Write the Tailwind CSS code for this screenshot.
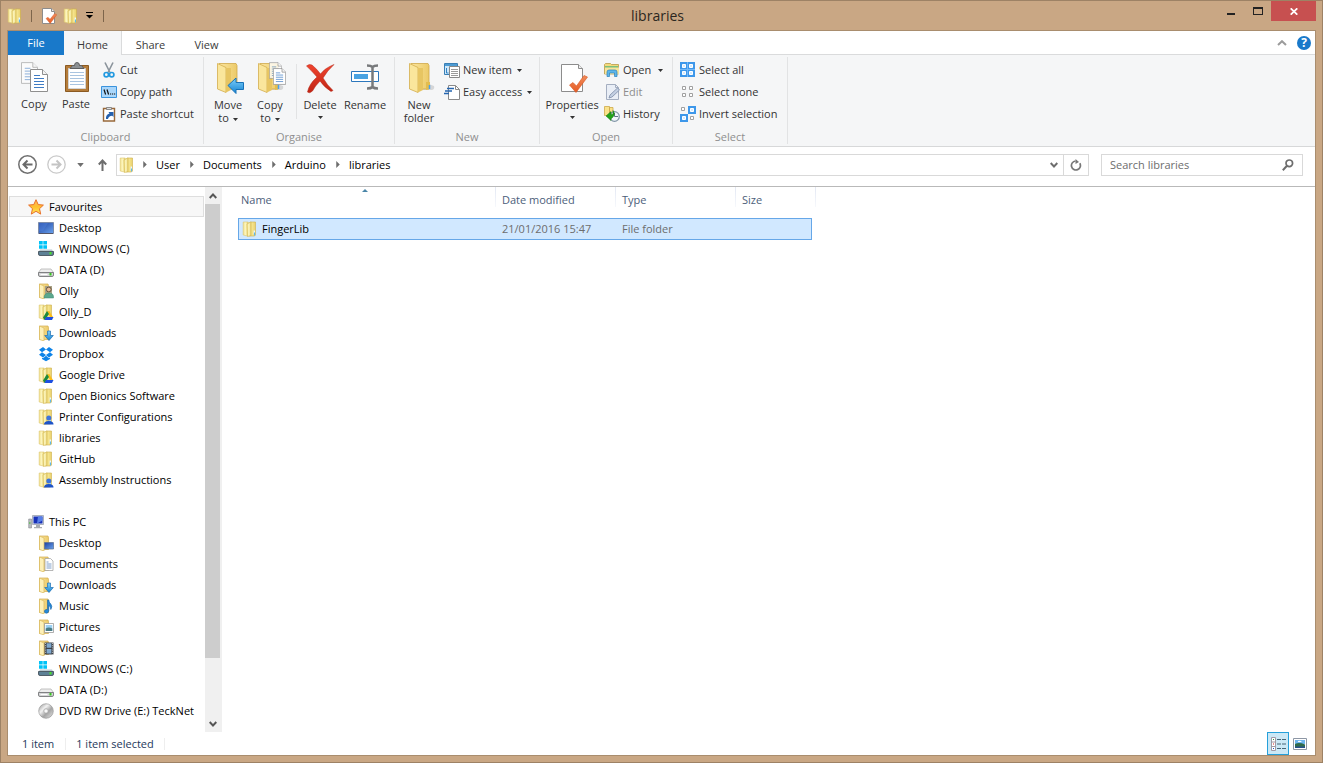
<!DOCTYPE html>
<html lang="en">
<head>
<meta charset="utf-8">
<title>libraries</title>
<script src="https://cdn.jsdelivr.net/npm/@tailwindcss/browser@4"></script>
</head>
<body class="h-screen overflow-hidden bg-[#c9a784] font-['Open_Sans','Noto_Sans',sans-serif] text-[11px] leading-4 text-black">

<svg class="absolute size-0" aria-hidden="true">
  <defs>
    <linearGradient id="gFold" x1="0" x2="1"><stop offset="0" stop-color="#f5e48e"/><stop offset=".5" stop-color="#fcf6c0"/><stop offset="1" stop-color="#e6cc66"/></linearGradient>
    <linearGradient id="gFoldM" x1="0" x2="1"><stop offset="0" stop-color="#d9bd55"/><stop offset=".5" stop-color="#f6e68f"/><stop offset="1" stop-color="#ead06c"/></linearGradient>
    <linearGradient id="gFoldB" x1="0" x2="1"><stop offset="0" stop-color="#fbe6a0"/><stop offset="1" stop-color="#ecca68"/></linearGradient>
    <linearGradient id="gBlue" x1="0" y1="0" x2="1" y2="1"><stop offset="0" stop-color="#1c3f9e"/><stop offset="1" stop-color="#6aa3ee"/></linearGradient>
    <linearGradient id="gArrow" x1="0" y1="0" x2="0" y2="1"><stop offset="0" stop-color="#7fd0fa"/><stop offset="1" stop-color="#1583d2"/></linearGradient>
    <linearGradient id="gRed" x1="0" y1="0" x2="0" y2="1"><stop offset="0" stop-color="#f0442f"/><stop offset="1" stop-color="#c02414"/></linearGradient>
    <linearGradient id="gOr" x1="0" y1="0" x2="0" y2="1"><stop offset="0" stop-color="#f08d5c"/><stop offset="1" stop-color="#e55a24"/></linearGradient>
    <linearGradient id="gStar" x1="0" y1="0" x2="0" y2="1"><stop offset="0" stop-color="#ffb65e"/><stop offset=".5" stop-color="#ffc02e"/><stop offset="1" stop-color="#ffe95c"/></linearGradient>
    <linearGradient id="gDisc" x1="0" y1="0" x2="1" y2="1"><stop offset="0" stop-color="#8d8d8d"/><stop offset=".35" stop-color="#f2f2f2"/><stop offset=".6" stop-color="#a5a5a5"/><stop offset="1" stop-color="#e8e8e8"/></linearGradient>
  </defs>
  <symbol id="folder" viewBox="0 0 16 16">
    <path d="M1.200 1h5v13.500l-1 .5-4-1z" fill="url(#gFold)" stroke="#dcc670" stroke-width=".6"/>
    <path d="M6.500 2.500 9 1h4.500v13l-1 1h-6z" fill="url(#gFoldM)" stroke="#cdb04c" stroke-width=".6"/>
    <path d="M5 3 9 .800v13.700l-3.500 1z" fill="url(#gFold)" stroke="#d3b855" stroke-width=".6"/>
    <path d="M12.300 9.500v4" stroke="#e9f7ff" stroke-width="1.500"/><path d="M12.500 11.500v3" stroke="#5db8ec" stroke-width="1.100"/>
  </symbol>
  <symbol id="folderO" viewBox="0 0 16 16">
    <path d="M1.500 1h8.500l.5 1.500V14.500H1.500z" fill="url(#gFoldB)" stroke="#d2ae50" stroke-width=".7"/>
    <path d="M1.500 1 6 3v13l-4.500-1.500z" fill="#fdf0b8" stroke="#d9b85c" stroke-width=".7"/>
  </symbol>
  <symbol id="desktop" viewBox="0 0 16 16"><path d="M.5 2.500h15v11H.5z" fill="url(#gBlue)" stroke="#7c8ba8"/><path d="M1 13.500h14" stroke="#556" /><path d="M1 3h9L5 11H1z" fill="#4d7fd9" opacity=".5"/></symbol>
  <symbol id="drive" viewBox="0 0 16 16"><path d="M3 7h10l2.500 3.500H.5z" fill="#eee" stroke="#aaa" stroke-width=".7"/><path d="M.5 10.500h15V13q0 1.500-1.500 1.500H2Q.5 14.500.5 13z" fill="#d6d6d8" stroke="#77787a" stroke-width=".9"/><path d="M2.500 12.500h7" stroke="#fff"/><path d="M11.500 11h2v2.500h-2z" fill="#37c51f"/></symbol>
  <symbol id="windrive" viewBox="0 0 16 16"><path d="M1 0h3.700v3.500H1zM5.300 0H9v3.500H5.300zM1 4.200h3.700v3.500H1zM5.300 4.200H9v3.500H5.300z" fill="#00c3f7"/><path d="M2 8.500h12l1.500 2.500H.5z" fill="#b9c9d2"/><path d="M.5 10.500h15V13q0 1.500-1.500 1.500H2Q.5 14.500.5 13z" fill="#5d8196" stroke="#46545e" stroke-width=".9"/><path d="M11.500 11h2v2.500h-2z" fill="#4be02a"/></symbol>
  <symbol id="user" viewBox="0 0 16 16"><use href="#folderO"/><path d="M7 3h7v10H7z" fill="#a9a285"/><circle cx="10.800" cy="6.500" r="2.400" fill="#e7ba94" stroke="#5b4a35" stroke-width=".9"/><path d="M6 15q0-5 5-5t4.500 5z" fill="#5ba78d" stroke="#3f8a72" stroke-width=".5"/></symbol>
  <symbol id="gdrive" viewBox="0 0 16 16"><use href="#folder"/><path d="m9 7.500 2.300-.5 3.700 6h-3z" fill="#fbbc1a"/><path d="M9 7 5 13.500 6.700 16l4.300-6z" fill="#1c8a3c"/><path d="M8 13h7.500L14 16H6.500z" fill="#1d4fe0"/></symbol>
  <symbol id="downloads" viewBox="0 0 16 16"><use href="#folderO"/><path d="M9.500 6h3v4.500h2.800L11 15.500 6.700 10.500h2.800z" fill="url(#gArrow)" stroke="#1c6fb4" stroke-width=".7"/></symbol>
  <symbol id="dropbox" viewBox="0 0 16 16"><path d="m5 1 3 2.500-4 2.800L1 3.800zM11 1 8 3.500l4 2.800 3-2.500zM1 8.800l3-2.500L8 9l-3 2.500zM15 8.800l-3-2.500L8 9l3 2.500zM8 9.800l3 2.500 1-.6v1.200L8 15.300l-4-2.400v-1.200l1 .6z" fill="#0d83e8"/></symbol>
  <symbol id="shared" viewBox="0 0 16 16"><use href="#folder"/><circle cx="10.800" cy="9" r="2.500" fill="#3d74dc"/><path d="M6 15.500q0-3.500 4.800-3.500t4.700 3.500z" fill="#1d53c8"/></symbol>
  <symbol id="star" viewBox="0 0 16 16"><path d="m8 .7 2.200 4.900 5.200.5-3.900 3.600 1.200 5.400L8 12.300l-4.700 2.800 1.200-5.400L.6 6.100l5.200-.5z" fill="url(#gStar)" stroke="#e8702a" stroke-width="1"/></symbol>
  <symbol id="pc" viewBox="0 0 16 16"><path d="M.7 5h2.800v9H.7z" fill="#b9bcc0" stroke="#787c80" stroke-width=".5"/><path d="M1 9h1.500" stroke="#35c020"/><path d="M4.500 1.500h11v9h-11z" fill="#dfe3ea" stroke="#9aa2ae" stroke-width=".8"/><path d="M5.500 2.500h9v7h-9z" fill="#1731b8"/><path d="M10 2.500h4.500v4L9 9.500z" fill="#577fe8"/><path d="M8 11h4v2h2v1.300H6V13h2z" fill="#a7abb0"/></symbol>
  <symbol id="fdesk" viewBox="0 0 16 16"><use href="#folderO"/><path d="M6.500 7.500h9v6.500h-9z" fill="url(#gBlue)" stroke="#5b708f" stroke-width=".7"/></symbol>
  <symbol id="fdoc" viewBox="0 0 16 16"><use href="#folderO"/><path d="M7 2.500h5.500L15 5v9.500H7z" fill="#fff" stroke="#999" stroke-width=".7"/><path d="M8.500 6h2M8.500 8h5M8.500 10h5M8.500 12h5" stroke="#5d86bb" stroke-width=".8"/></symbol>
  <symbol id="fmusic" viewBox="0 0 16 16"><use href="#folderO"/><path d="M9.500 2h1.300q0 2.500 2 4 2 2.500 0 5.500 0-3-2-4v5.500q-.5 2.500-2.800 2.200-2-.5-1.500-2.400.8-1.800 3-1.300z" fill="#2589d8" stroke="#1462a8" stroke-width=".6"/></symbol>
  <symbol id="fpic" viewBox="0 0 16 16"><use href="#folderO"/><path d="M6.500 4.500h9v9h-9z" fill="#fff" stroke="#8c8c8c" stroke-width=".7"/><path d="M7.700 6h6.600v6H7.700z" fill="#9bd0f3"/><path d="M7.700 9.500q3-2 6.600 0V12H7.700z" fill="#4a7d86"/></symbol>
  <symbol id="fvid" viewBox="0 0 16 16"><use href="#folderO"/><path d="M6.500 2.500h9v12h-9z" fill="#3c4148"/><path d="M8.600 3.300h4.800v4.500H8.600zM8.600 9h4.800v4.500H8.600z" fill="#7fa9cf"/><path d="M7.500 3v11.500M14.500 3v11.500" stroke="#ddd" stroke-width=".8" stroke-dasharray="1 1.200"/></symbol>
  <symbol id="disc" viewBox="0 0 16 16"><circle cx="8" cy="8" r="7.300" fill="url(#gDisc)" stroke="#8d8d8d" stroke-width=".6"/><circle cx="8" cy="8" r="2.300" fill="#ececec" stroke="#9a9a9a" stroke-width=".6"/><circle cx="8" cy="8" r=".9" fill="#fff"/></symbol>
  <symbol id="check" viewBox="0 0 32 32"><path d="M5.500 2.500h17l4 4v23h-21z" fill="#fff" stroke="#8c8c8c"/><path d="M22.500 2.500v4h4" fill="#eee" stroke="#8c8c8c"/><path d="m13.500 23 3.500-2.500 3.500 3.500L28 13.500l3.500 1.500L20 30.500z" fill="url(#gOr)" stroke="#d9541f" stroke-width=".6"/></symbol>
  <symbol id="checkSmall" viewBox="0 0 16 16"><path d="M1.500.500h9l3 3v12h-12z" fill="#fff" stroke="#8c8c8c"/><path d="M10.500.5v3h3" fill="#eee" stroke="#8c8c8c"/><path d="m5 10.500 2-1.200 2 2 4.500-5.600 2.300 1L9.200 15.500z" fill="url(#gOr)" stroke="#d9541f" stroke-width=".4"/></symbol>
  <symbol id="bigfolder" viewBox="0 0 32 32">
    <path d="M14 28h14q3-1 2-4l-5-2z" fill="#000" opacity=".13"/>
    <path d="M7 1.500h17l1 2V27H7z" fill="url(#gFoldB)" stroke="#cfa84a" stroke-width=".8"/>
    <path d="M22 20h4v7l-4 1z" fill="#e3bd4e"/><path d="M25.500 23v4" stroke="#4d9fe8" stroke-width="1.500"/>
    <path d="M5.500 1.500 14 5.500v25L5.500 27z" fill="#fae69c" stroke="#d3ad4e" stroke-width=".8"/>
    <path d="M14 6h5v22l-5 2.500z" fill="#e7c562"/>
  </symbol>
  <symbol id="page" viewBox="0 0 18 23"><path d="M.5.500h12l5 5v17H.5z" fill="#fff" stroke="#8f8f8f"/><path d="M12.500.5v5h5" fill="#f3f3f3" stroke="#8f8f8f"/><path d="M4 6.500h6M4 9.500h10M4 12.500h10M4 15.500h10M4 18.500h10" stroke="#3f7cc4"/></symbol>
  <symbol id="caret" viewBox="0 0 5 3"><path d="M0 0h5L2.500 3z" fill="currentColor"/></symbol>
  <symbol id="crumb" viewBox="0 0 4 8"><path d="m0 0 4 4-4 4z" fill="#6d6d6d"/></symbol>
</svg>

<div class="flex h-full flex-col border border-[#9d8265] px-[6px] pb-[6px]">

  <header class="flex h-[29px] shrink-0 items-start">
    <div class="flex h-full flex-1 items-center text-[#8a6f52]">
      <svg class="size-4"><use href="#folder"/></svg>
      <span class="ml-2 h-3 w-px bg-[#7d654b]"></span>
      <button class="ml-[9px]" aria-label="Properties"><svg class="size-4"><use href="#checkSmall"/></svg></button>
      <button class="ml-[6px]" aria-label="New folder"><svg class="size-4"><use href="#folder"/></svg></button>
      <button class="ml-[7px]" aria-label="Customise toolbar"><svg class="h-[7px] w-[7px]" viewBox="0 0 7 7"><path d="M0 .500h7" stroke="#000"/><path d="M0 3h7L3.500 6.500z"/></svg></button>
      <span class="ml-[10px] h-3 w-px bg-[#7d654b]"></span>
    </div>
    <h1 class="pr-2 pt-[5px] text-[14px] leading-5 text-[#2b2620]">libraries</h1>
    <div class="flex flex-1 justify-end">
      <button class="flex h-5 w-[27px] items-center justify-center" aria-label="Minimise"><svg class="h-[10px] w-[10px]" viewBox="0 0 10 10"><path d="M1 7h8v2H1z" fill="#222"/></svg></button>
      <button class="flex h-5 w-[27px] items-center justify-center" aria-label="Maximise"><svg class="h-2 w-[10px]" viewBox="0 0 10 8"><path d="M0 0h10v8H0zm1 2v5h8V2z" fill="#222" fill-rule="evenodd"/></svg></button>
      <button class="flex h-5 w-[45px] items-center justify-center bg-[#c75050]" aria-label="Close"><svg class="h-[7px] w-2" viewBox="0 0 8 7"><path d="m.7.300 6.600 6.400M7.300.300.7 6.700" stroke="#fff" stroke-width="1.700"/></svg></button>
    </div>
  </header>

  <div class="flex min-h-0 flex-1 flex-col border border-[#a98d6e] bg-white">

    <nav class="flex h-6 shrink-0 border-b border-[#dadbdc] text-[#3b3b3b]">
      <button class="-mb-px w-14 bg-[#1979ca] text-white">File</button>
      <button class="-mb-px w-[58px] border-r border-[#dadbdc] bg-[#f5f6f7] pt-1">Home</button>
      <button class="w-[57px] pt-1">Share</button>
      <button class="w-[55px] pt-1">View</button>
      <div class="ml-auto flex items-center gap-[10px] pr-1">
        <button aria-label="Minimise the ribbon"><svg class="h-[6px] w-[10px]" viewBox="0 0 10 6"><path d="m1 5 4-3.800L9 5" fill="none" stroke="#9b9b9b" stroke-width="2"/></svg></button>
        <button class="flex size-[14px] items-center justify-center rounded-full bg-[#1979ca] text-[12px] font-bold text-white" aria-label="Help">?</button>
      </div>
    </nav>

    <section class="flex h-[92px] shrink-0 border-b border-[#d7d8d9] bg-[#f5f6f7] text-[#333]">
      <div class="my-[2px] flex w-[196px] flex-col border-r border-[#e2e3e4]">
        <div class="flex flex-1 pl-[5px] pt-[2px]">
          <button class="flex w-[42px] flex-col items-center pt-[3px]">
            <svg class="h-8 w-8" viewBox="0 0 32 32"><use href="#page" x="3" y="0" width="17" height="22" opacity=".6"/><use href="#page" x="12" y="7" width="18" height="23"/></svg>
            <span class="mt-[2px]">Copy</span></button>
          <button class="flex w-[42px] flex-col items-center pt-[3px]">
            <svg class="h-8 w-8" viewBox="0 0 32 32"><path d="M5.500 3.500h23v26h-23z" fill="#b47c3a" stroke="#8b5a22"/><path d="M8.500 6.500h17v20h-17z" fill="#fff" stroke="#d5d5d5"/><path d="M10 10.500h14M10 13.500h14M10 16.500h14M10 19.500h14M10 22.500h14" stroke="#a9c4e0"/><path d="M10 6.500 12.500 3.500h2Q14.500.5 17 .5t2.500 3h2L24 6.500z" fill="#8c9093" stroke="#5d5f61"/></svg>
            <span class="mt-[2px]">Paste</span></button>
          <div class="flex flex-col pl-1">
            <button class="flex h-[22px] items-center gap-[3px]"><svg class="size-4" viewBox="0 0 16 16"><path d="m4 .5 5 10M12 .5l-5 10" stroke="#8a939b" stroke-width="1.600"/><circle cx="5.300" cy="12.700" r="2.200" fill="none" stroke="#2299e0" stroke-width="1.700"/><circle cx="10.700" cy="12.700" r="2.200" fill="none" stroke="#2299e0" stroke-width="1.700"/></svg>Cut</button>
            <button class="flex h-[22px] items-center gap-[3px]"><svg class="size-4" viewBox="0 0 16 16"><path d="M.5 2.500h15v11H.5z" fill="#a9d6fb" stroke="#3a93dd"/><path d="m3 5.500 1.600 5M6 5.500l1.600 5M9 10h1.200M11 10h1.200M13 10h1.200" stroke="#111" stroke-width="1.200"/></svg>Copy path</button>
            <button class="flex h-[22px] items-center gap-[3px]"><svg class="size-4" viewBox="0 0 16 16"><path d="M2.500 2.500h11v12.500h-11z" fill="#fff" stroke="#98683a" stroke-width="1.400"/><path d="M5.500 3.500V1.500h5v2z" fill="#ddd" stroke="#777" stroke-width=".8"/><path d="M5 13q-.5-4.500 3.500-5.500L7.500 6h5v5l-1.300-1.300Q7.500 10 7 13z" fill="#2560ad"/></svg>Paste shortcut</button>
          </div>
        </div>
        <div class="pb-px text-center leading-3 text-[#8f8f8f]">Clipboard</div>
      </div>

      <div class="my-[2px] flex w-[191px] flex-col border-r border-[#e2e3e4]">
        <div class="flex flex-1 pl-[3px] pt-[2px]">
          <button class="flex w-[42px] flex-col items-center pt-[3px] leading-[13px]">
            <svg class="h-8 w-8" viewBox="0 0 32 32"><use href="#bigfolder" x="0" width="32" height="32"/><path d="M16 23.500 24 16v4.500h7.500v7H24v4z" fill="url(#gArrow)" stroke="#1972b8"/></svg>
            <span class="mt-1">Move<br>to <svg class="ml-px inline h-[3px] w-[5px]"><use href="#caret"/></svg></span></button>
          <button class="flex w-[42px] flex-col items-center pt-[3px] leading-[13px]">
            <svg class="h-8 w-8" viewBox="0 0 32 32"><use href="#bigfolder" x="-1" width="32" height="32"/><use href="#page" x="15" y="0" width="13" height="17" opacity=".8"/><use href="#page" x="19" y="6" width="13" height="17"/></svg>
            <span class="mt-1">Copy<br>to <svg class="ml-px inline h-[3px] w-[5px]"><use href="#caret"/></svg></span></button>
          <span class="mx-[5px] mt-[5px] h-[55px] w-px bg-[#e2e3e4]"></span>
          <button class="flex w-9 flex-col items-center pt-[3px] leading-[13px]">
            <svg class="h-8 w-8" viewBox="0 0 32 32"><path d="M2.500 4Q5 1.500 8 3q5 4 8.500 9Q21 6 30 2.500 23 9 19 16q4 7 10 12.500l-2 1Q20 25 16 19q-5 5-7.500 10-3 3-5 1Q5 22 13 15 7 8 2.500 4z" fill="url(#gRed)" stroke="#b32415" stroke-width=".5"/></svg>
            <span class="mt-1">Delete</span><svg class="mt-[5px] h-[3px] w-[5px]"><use href="#caret"/></svg></button>
          <button class="ml-[3px] flex w-12 flex-col items-center pt-[3px] leading-[13px]">
            <svg class="h-8 w-8" viewBox="0 0 32 32"><path d="M2.500 9.500h27v10h-27z" fill="#fff" stroke="#2c77bd"/><path d="M5 12h14v5H5z" fill="#4aa3e2"/><path d="M18 3.500q4 0 5.500 1.500Q25 3.500 29 3.500M18 26.500q4 0 5.500-1.500 1.500 1.500 5.500 1.500M23.500 5v20" fill="none" stroke="#77797b" stroke-width="2.500"/></svg>
            <span class="mt-1">Rename</span></button>
        </div>
        <div class="pb-px text-center leading-3 text-[#8f8f8f]">Organise</div>
      </div>

      <div class="my-[2px] flex w-[145px] flex-col border-r border-[#e2e3e4]">
        <div class="flex flex-1 pl-[3px] pt-[2px]">
          <button class="flex w-[42px] flex-col items-center pt-[3px] leading-[13px]">
            <svg class="h-8 w-8" viewBox="-1 0 32 32"><use href="#bigfolder" width="32" height="32"/></svg>
            <span class="mt-1">New<br>folder</span></button>
          <div class="flex flex-col pl-1">
            <button class="flex h-[22px] items-center gap-[3px]"><svg class="size-4" viewBox="0 0 16 16"><path d="M.5 1.500h13v11H.5z" fill="#cfe8fa" stroke="#3a7fb5"/><path d="M1 3h12" stroke="#4d9bd3" stroke-width="2"/><path d="M2.500 6v5h2" stroke="#2f83c4" fill="none"/><path d="M5.500 4.500h10v11h-10z" fill="#fff" stroke="#888"/><path d="M7 7.500h7M7 9.500h7M7 11.500h7M7 13.500h7" stroke="#9a9a9a"/></svg>New item<svg class="ml-[2px] h-[3px] w-[5px]"><use href="#caret"/></svg></button>
            <button class="flex h-[22px] items-center gap-[3px]"><svg class="size-4" viewBox="0 0 16 16"><path d="M4.500 1.500h7l4 4v10h-11z" fill="#fff" stroke="#8a8a8a"/><path d="M11.500 1.500v4h4" fill="none" stroke="#8a8a8a"/><path d="M3 4.500h7M1 7h7M0 9.500h5" stroke="#2566b0" stroke-width="1.300"/></svg>Easy access<svg class="ml-[2px] h-[3px] w-[5px]"><use href="#caret"/></svg></button>
          </div>
        </div>
        <div class="pb-px text-center leading-3 text-[#8f8f8f]">New</div>
      </div>

      <div class="my-[2px] flex w-[133px] flex-col border-r border-[#e2e3e4]">
        <div class="flex flex-1 pl-[3px] pt-[2px]">
          <button class="flex w-[58px] flex-col items-center pt-[3px] leading-[13px]">
            <svg class="h-8 w-8"><use href="#check"/></svg>
            <span class="mt-1">Properties</span><svg class="mt-[5px] h-[3px] w-[5px]"><use href="#caret"/></svg></button>
          <div class="flex flex-col pl-[3px]">
            <button class="flex h-[22px] items-center gap-[3px]"><svg class="size-4" viewBox="0 0 16 16"><path d="M.5 12V2.500l1-1h5l1 1h7V12z" fill="#f4da7c" stroke="#b99b47" stroke-width=".8"/><path d="M1 4h13v2H1z" fill="#7cc07c"/><path d="M1 5.500h14V12H1z" fill="#f8e59b"/><path d="M3 14.500V10q0-2 2-2h6q2 0 2 2v4.500h-2.500V11h-5v3.500z" fill="#5fb6ea" stroke="#2b81ba" stroke-width=".7"/></svg>Open<svg class="ml-1 h-[3px] w-[5px]"><use href="#caret"/></svg></button>
            <button class="flex h-[22px] items-center gap-[3px] text-[#8d8d8d]" disabled><svg class="size-4" viewBox="0 0 16 16"><path d="M2.500.500h9l3 3v12h-12z" fill="#e9eef6" stroke="#a4aec0"/><path d="M11.500.5v3h3" fill="none" stroke="#a4aec0"/><path d="m5 14 1-3 7.500-7 2 2L8 13z" fill="#c3cfe2" stroke="#7d8da8" stroke-width=".8"/></svg>Edit</button>
            <button class="flex h-[22px] items-center gap-[3px]"><svg class="size-4" viewBox="0 0 16 16"><path d="M.5.500h5v9h-5zM5.500 1.500H9v5H5.500z" fill="#fae28a" stroke="#cda94a" stroke-width=".8"/><circle cx="10.500" cy="10.500" r="4.800" fill="#f1f6fa" stroke="#8196a8" stroke-width="1.200"/><path d="M10.500 7v3.500H14" fill="none" stroke="#5d7080"/><path d="m2 10 5-4.500v2.700h2V4.500q3 4-1.500 8H7v2z" fill="#23a31a" stroke="#127a0d" stroke-width=".5"/></svg>History</button>
          </div>
        </div>
        <div class="pb-px text-center leading-3 text-[#8f8f8f]">Open</div>
      </div>

      <div class="my-[2px] flex w-[115px] flex-col border-r border-[#e2e3e4]">
        <div class="flex flex-1 flex-col items-start pl-[7px] pt-[2px]">
          <button class="flex h-[22px] items-center gap-[3px]"><svg class="size-4" viewBox="0 0 16 16"><path d="M0 0h15v15H0z" fill="#3d97ea"/><path d="M2.500 2.500h3v3h-3zM9.500 2.500h3v3h-3zM2.500 9.500h3v3h-3zM9.500 9.500h3v3h-3z" fill="#d5ebff" stroke="#fff"/><path d="M7.500 0v15M0 7.500h15" stroke="#72b8f8"/></svg>Select all</button>
          <button class="flex h-[22px] items-center gap-[3px]"><svg class="size-4" viewBox="0 0 16 16"><path d="M2.500 2.500h3v3h-3zM9.500 2.500h3v3h-3zM2.500 9.500h3v3h-3zM9.500 9.500h3v3h-3z" fill="#fff" stroke="#a0a0a0"/></svg>Select none</button>
          <button class="flex h-[22px] items-center gap-[3px]"><svg class="size-4" viewBox="0 0 16 16"><path d="M8 0h8v8H8zM0 8h8v8H0z" fill="#3d97ea"/><path d="M10.500 2.500h3v3h-3zM2.500 10.500h3v3h-3z" fill="#d5ebff" stroke="#fff"/><path d="M1.500 1.500h3v3h-3zM10.500 10.500h3v3h-3z" fill="#fff" stroke="#a0a0a0"/></svg>Invert selection</button>
        </div>
        <div class="pb-px text-center leading-3 text-[#8f8f8f]">Select</div>
      </div>
    </section>

    <div class="flex h-10 shrink-0 items-center border-b border-[#b9b9b9] pb-1 pl-[10px] pr-3">
      <button aria-label="Back"><svg class="size-[19px]" viewBox="0 0 19 19"><circle cx="9.500" cy="9.500" r="8.700" fill="none" stroke="#6f6f6f" stroke-width="1.500"/><path d="M14.500 9.500H6M9.500 5.500l-4 4 4 4" fill="none" stroke="#6a6a6a" stroke-width="2"/></svg></button>
      <button class="ml-[10px]" aria-label="Forward" disabled><svg class="size-[19px]" viewBox="0 0 19 19"><circle cx="9.500" cy="9.500" r="8.700" fill="none" stroke="#c9c9c9" stroke-width="1.300"/><path d="M4.500 9.500H13M9.500 5.500l4 4-4 4" fill="none" stroke="#c4c4c4" stroke-width="2"/></svg></button>
      <button class="ml-[11px] text-[#6f6f6f]" aria-label="Recent locations"><svg class="h-1 w-[7px]" viewBox="0 0 5 3"><use href="#caret"/></svg></button>
      <button class="ml-[14px]" aria-label="Up"><svg class="h-3 w-[9px]" viewBox="0 0 9 12"><path d="M4.500 12V2M.8 5.500 4.500 1.500l3.700 4" fill="none" stroke="#6d6d6d" stroke-width="2"/></svg></button>
      <div class="ml-[9px] flex h-[22px] flex-1 items-center border border-[#d9d9d9] pl-[2px]">
        <svg class="size-4"><use href="#folder"/></svg>
        <svg class="ml-2 h-[7px] w-1"><use href="#crumb"/></svg>
        <a href="#" class="ml-[9px]">User</a><svg class="ml-[10px] h-[7px] w-1"><use href="#crumb"/></svg>
        <a href="#" class="ml-[9px]">Documents</a><svg class="ml-[10px] h-[7px] w-1"><use href="#crumb"/></svg>
        <a href="#" class="ml-[9px]">Arduino</a><svg class="ml-[10px] h-[7px] w-1"><use href="#crumb"/></svg>
        <a href="#" class="ml-[9px]">libraries</a>
        <button class="ml-auto mr-[5px]" aria-label="Previous locations"><svg class="h-[6px] w-2" viewBox="0 0 8 6"><path d="m.7 1 3.300 3.500L7.300 1" fill="none" stroke="#6d6d6d" stroke-width="1.900"/></svg></button>
        <button class="flex h-full w-[25px] items-center justify-center border-l border-[#d9d9d9]" aria-label="Refresh"><svg class="size-3" viewBox="0 0 12 12"><path d="M9.800 4.200A4.500 4.500 0 1 1 5.500 2" fill="none" stroke="#777" stroke-width="1.700"/><path d="M5.500 0v5L9 3z" fill="#777"/></svg></button>
      </div>
      <label class="ml-3 flex h-[22px] w-[202px] items-center border border-[#d9d9d9] px-2">
        <input type="text" placeholder="Search libraries" aria-label="Search libraries" class="min-w-0 flex-1 outline-none placeholder:text-[#6d6d6d]">
        <svg class="size-3" viewBox="0 0 12 12"><circle cx="7.300" cy="4.300" r="3.300" fill="none" stroke="#6d6d6d" stroke-width="1.700"/><path d="M5 6.800.8 11.200" stroke="#6d6d6d" stroke-width="2"/></svg>
      </label>
    </div>

    <main class="flex min-h-0 flex-1">
      <aside class="flex w-[214px] shrink-0 border-r border-[#f0f0f0]">
        <div class="min-w-0 flex-1 whitespace-nowrap pl-px pr-px pt-[9px]">
          <a href="#" class="flex h-[21px] items-center gap-[5px] border border-[#dedede] bg-[#f7f7f7] pl-[18px]"><svg class="size-4"><use href="#star"/></svg>Favourites</a>
          <ul>
            <li><a href="#" class="flex h-[21px] items-center gap-[5px] pl-[29px]"><svg class="size-4"><use href="#desktop"/></svg>Desktop</a></li>
            <li><a href="#" class="flex h-[21px] items-center gap-[5px] pl-[29px]"><svg class="size-4"><use href="#windrive"/></svg>WINDOWS (C)</a></li>
            <li><a href="#" class="flex h-[21px] items-center gap-[5px] pl-[29px]"><svg class="size-4"><use href="#drive"/></svg>DATA (D)</a></li>
            <li><a href="#" class="flex h-[21px] items-center gap-[5px] pl-[29px]"><svg class="size-4"><use href="#user"/></svg>Olly</a></li>
            <li><a href="#" class="flex h-[21px] items-center gap-[5px] pl-[29px]"><svg class="size-4"><use href="#gdrive"/></svg>Olly_D</a></li>
            <li><a href="#" class="flex h-[21px] items-center gap-[5px] pl-[29px]"><svg class="size-4"><use href="#downloads"/></svg>Downloads</a></li>
            <li><a href="#" class="flex h-[21px] items-center gap-[5px] pl-[29px]"><svg class="size-4"><use href="#dropbox"/></svg>Dropbox</a></li>
            <li><a href="#" class="flex h-[21px] items-center gap-[5px] pl-[29px]"><svg class="size-4"><use href="#gdrive"/></svg>Google Drive</a></li>
            <li><a href="#" class="flex h-[21px] items-center gap-[5px] pl-[29px]"><svg class="size-4"><use href="#folder"/></svg>Open Bionics Software</a></li>
            <li><a href="#" class="flex h-[21px] items-center gap-[5px] pl-[29px]"><svg class="size-4"><use href="#shared"/></svg>Printer Configurations</a></li>
            <li><a href="#" class="flex h-[21px] items-center gap-[5px] pl-[29px]"><svg class="size-4"><use href="#folder"/></svg>libraries</a></li>
            <li><a href="#" class="flex h-[21px] items-center gap-[5px] pl-[29px]"><svg class="size-4"><use href="#folder"/></svg>GitHub</a></li>
            <li><a href="#" class="flex h-[21px] items-center gap-[5px] pl-[29px]"><svg class="size-4"><use href="#shared"/></svg>Assembly Instructions</a></li>
          </ul>
          <a href="#" class="mt-[21px] flex h-[21px] items-center gap-[5px] pl-[19px]"><svg class="size-4"><use href="#pc"/></svg>This PC</a>
          <ul>
            <li><a href="#" class="flex h-[21px] items-center gap-[5px] pl-[29px]"><svg class="size-4"><use href="#fdesk"/></svg>Desktop</a></li>
            <li><a href="#" class="flex h-[21px] items-center gap-[5px] pl-[29px]"><svg class="size-4"><use href="#fdoc"/></svg>Documents</a></li>
            <li><a href="#" class="flex h-[21px] items-center gap-[5px] pl-[29px]"><svg class="size-4"><use href="#downloads"/></svg>Downloads</a></li>
            <li><a href="#" class="flex h-[21px] items-center gap-[5px] pl-[29px]"><svg class="size-4"><use href="#fmusic"/></svg>Music</a></li>
            <li><a href="#" class="flex h-[21px] items-center gap-[5px] pl-[29px]"><svg class="size-4"><use href="#fpic"/></svg>Pictures</a></li>
            <li><a href="#" class="flex h-[21px] items-center gap-[5px] pl-[29px]"><svg class="size-4"><use href="#fvid"/></svg>Videos</a></li>
            <li><a href="#" class="flex h-[21px] items-center gap-[5px] pl-[29px]"><svg class="size-4"><use href="#windrive"/></svg>WINDOWS (C:)</a></li>
            <li><a href="#" class="flex h-[21px] items-center gap-[5px] pl-[29px]"><svg class="size-4"><use href="#drive"/></svg>DATA (D:)</a></li>
            <li><a href="#" class="flex h-[21px] items-center gap-[5px] pl-[29px]"><svg class="size-4 shrink-0"><use href="#disc"/></svg>DVD RW Drive (E:) TeckNet</a></li>
          </ul>
        </div>
        <div class="flex w-4 shrink-0 flex-col bg-[#f0f0f0]">
          <button class="flex h-[17px] items-center justify-center" aria-label="Scroll up"><svg class="h-[6px] w-2" viewBox="0 0 8 6"><path d="m.7 5 3.300-3.500L7.300 5" fill="none" stroke="#555" stroke-width="1.900"/></svg></button>
          <div class="w-[15px] grow bg-[#cdcdcd]"></div>
          <div class="h-[57px] shrink-0"></div>
          <button class="flex h-[17px] items-center justify-center" aria-label="Scroll down"><svg class="h-[6px] w-2" viewBox="0 0 8 6"><path d="m.7 1 3.300 3.500L7.300 1" fill="none" stroke="#555" stroke-width="1.900"/></svg></button>
        </div>
      </aside>

      <div class="relative flex-1 pl-4">
        <svg class="absolute left-[140px] top-[2px] h-[3px] w-[6px]" viewBox="0 0 6 3"><path d="m0 3 3-3 3 3z" fill="#4a86a8"/></svg>
        <table class="w-[578px] table-fixed border-separate border-spacing-0 text-left">
          <colgroup><col class="w-[258px]"><col class="w-[120px]"><col class="w-[120px]"><col class="w-[76px]"><col class="w-1"></colgroup>
          <thead>
            <tr class="h-[31px] align-top text-[#4c607a]">
              <th class="bg-[linear-gradient(#e3e8f3,#f6f8fc)] bg-[length:1px_20px] bg-right-top bg-no-repeat pl-[3px] pt-[5px] font-normal">Name</th>
              <th class="bg-[linear-gradient(#e3e8f3,#f6f8fc)] bg-[length:1px_20px] bg-right-top bg-no-repeat pl-[6px] pt-[5px] font-normal">Date modified</th>
              <th class="bg-[linear-gradient(#e3e8f3,#f6f8fc)] bg-[length:1px_20px] bg-right-top bg-no-repeat pl-[6px] pt-[5px] font-normal">Type</th>
              <th class="pl-[6px] pt-[5px] font-normal">Size</th>
              <td class="bg-[linear-gradient(#e3e8f3,#f6f8fc)] bg-[length:1px_20px] bg-right-top bg-no-repeat"></td>
            </tr>
          </thead>
          <tbody>
            <tr class="h-[22px] text-[#6d6d6d]">
              <td class="border-y border-l border-[#66a7e8] bg-[#d1e8ff] pl-[3px] text-black"><span class="flex items-center gap-1"><svg class="size-4"><use href="#folder"/></svg>FingerLib</span></td>
              <td class="border-y border-[#66a7e8] bg-[#d1e8ff] pl-[6px]">21/01/2016 15:47</td>
              <td class="border-y border-[#66a7e8] bg-[#d1e8ff] pl-[6px]">File folder</td>
              <td class="border-y border-r border-[#66a7e8] bg-[#d1e8ff]"></td>
              <td></td>
            </tr>
          </tbody>
        </table>
      </div>
    </main>

    <footer class="flex h-[23px] shrink-0 items-center pl-[14px] pr-1 text-[#1e395b]">
      <span>1 item</span><span class="ml-[11px] h-3 w-px bg-[#eee]"></span>
      <span class="ml-[10px]">1 item selected</span><span class="ml-[10px] h-3 w-px bg-[#eee]"></span>
      <button class="ml-auto flex h-[23px] w-[22px] items-center justify-center border border-[#26a0da] bg-[#cbe8f6]" aria-label="Details view"><svg class="h-[14px] w-[15px]" viewBox="0 0 15 14"><path d="M.5.500h4v13h-4zM.5 5h4M.5 9.500h4" fill="#fff" stroke="#a09aa6"/><path d="M2 2h1v1H2z" fill="#3a9a3a"/><path d="M2 6.500h1v1H2z" fill="#d22"/><path d="M2 11h1v1H2z" fill="#25c"/><path d="M6 2.500h4M11 2.500h4M6 7h4M11 7h4M6 11.500h4M11 11.500h4" stroke="#456577"/></svg></button>
      <button class="flex h-[22px] w-[22px] items-center justify-center" aria-label="Large thumbnails view"><svg class="h-3 w-[14px]" viewBox="0 0 14 12"><path d="M.5.500h13v11H.5z" fill="#fff" stroke="#8d97a5"/><path d="M2 2h10v4H2z" fill="#6db5ef"/><path d="M5 3q2-1 4 1H5z" fill="#fff"/><path d="M2 6q4-2 10 .5V10H2z" fill="#2f6b4c"/><path d="M2 8.500h10V10H2z" fill="#27518c"/></svg></button>
    </footer>
  </div>
</div>
</body>
</html>
